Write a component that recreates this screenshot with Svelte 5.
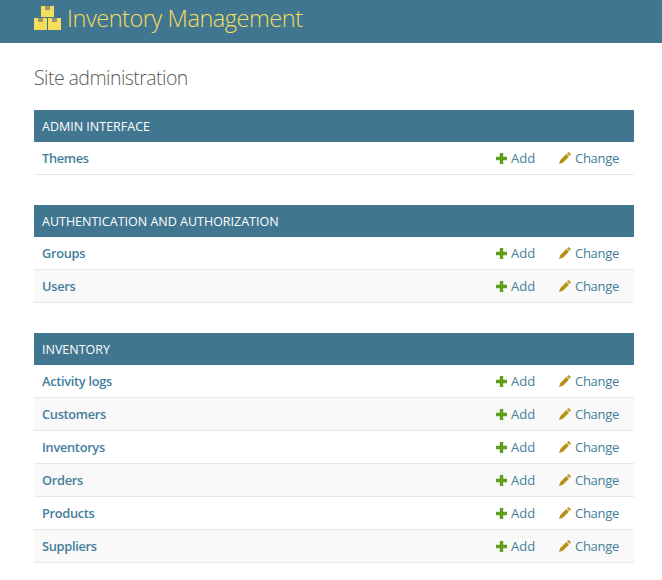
<script>
    const modules = [
        { name: 'ADMIN INTERFACE', models: ['Themes'] },
        { name: 'AUTHENTICATION AND AUTHORIZATION', models: ['Groups', 'Users'] },
        { name: 'INVENTORY', models: ['Activity logs', 'Customers', 'Inventorys', 'Orders', 'Products', 'Suppliers'] }
    ];
</script>

<header class="header">
    <svg class="logo" width="28" height="26" viewBox="0 0 28 26">
        <path fill="#f5dd5d" d="M7 0h4v4h5V0h4v11H7z" />
        <path fill="#f5dd5d" d="M0 12h4v4h5v-4h4v12H0z" />
        <path fill="#f5dd5d" d="M14 12h4v4h5v-4h4v12H14z" />
        <path fill="#9a9a6e" d="M11 0h5v4h-5zM4 12h5v4H4zM18 12h5v4h-5z" />
    </svg>
    <h1>Inventory Management</h1>
</header>

<main class="content">
    <h2>Site administration</h2>
    {#each modules as mod}
        <section class="module">
            <div class="caption">{mod.name}</div>
            {#each mod.models as model, i}
                <div class="row" class:alt={i % 2 == 1}>
                    <span class="model">{model}</span>
                    <span class="action add">
                        <svg width="11" height="11" viewBox="0 0 11 11"><path fill="#5f9e1f" d="M3.800 0h3.400v3.800H11v3.400H7.200V11H3.800V7.200H0V3.800h3.800z" /></svg>
                        Add
                    </span>
                    <span class="action change">
                        <svg width="12" height="12" viewBox="0 0 12 12">
                            <path fill="#c49a22" d="M9 .4a1 1 0 0 1 1.300 0l1.300 1.300a1 1 0 0 1 0 1.300L10.500 4.100 7.900 1.500z" />
                            <path fill="#b98f1c" d="M7.300 2.100 9.900 4.700 3.900 10.700 0 12l1.300-3.900z" />
                        </svg>
                        Change
                    </span>
                </div>
            {/each}
        </section>
    {/each}
</main>

<style>
    :global(body) {
        background: #fff;
        font-family: "Open Sans", "Liberation Sans", sans-serif;
        font-size: 13px;
    }

    .header {
        display: flex;
        align-items: center;
        gap: 5px;
        height: 43px;
        padding-left: 34px;
        background: #417690;
        overflow: hidden;
    }

    .logo {
        margin-top: -6px;
    }

    h1 {
        margin: -8px 0 0;
        font-size: 23.5px;
        letter-spacing: -0.45px;
        font-weight: 300;
        color: #f5dd5d;
    }

    .content {
        padding: 23px 28px 0 34px;
    }

    h2 {
        margin: 0 0 20px;
        font-size: 19.500px;
        letter-spacing: -0.55px;
        line-height: 24px;
        font-weight: 300;
        color: #5a5a5a;
    }

    .module {
        margin-bottom: 30px;
    }

    .caption {
        height: 32px;
        padding-left: 8px;
        line-height: 33px;
        background: #417690;
        color: #fff;
        font-size: 12.5px;
        font-weight: 500;
    }

    .row {
        display: flex;
        align-items: center;
        height: 32px;
        padding-left: 8px;
        border-bottom: 1px solid #e8e8e8;
    }

    .alt {
        background: #f9f9f9;
    }

    .model {
        flex: 1;
        font-size: 12.800px;
        font-weight: 600;
        color: #447e9b;
        letter-spacing: -0.3px;
    }

    .action {
        display: flex;
        align-items: center;
        gap: 4px;
        color: #447e9b;
    }

    .add {
        width: 63px;
    }

    .change {
        width: 75px;
        letter-spacing: -0.3px;
    }
</style>
